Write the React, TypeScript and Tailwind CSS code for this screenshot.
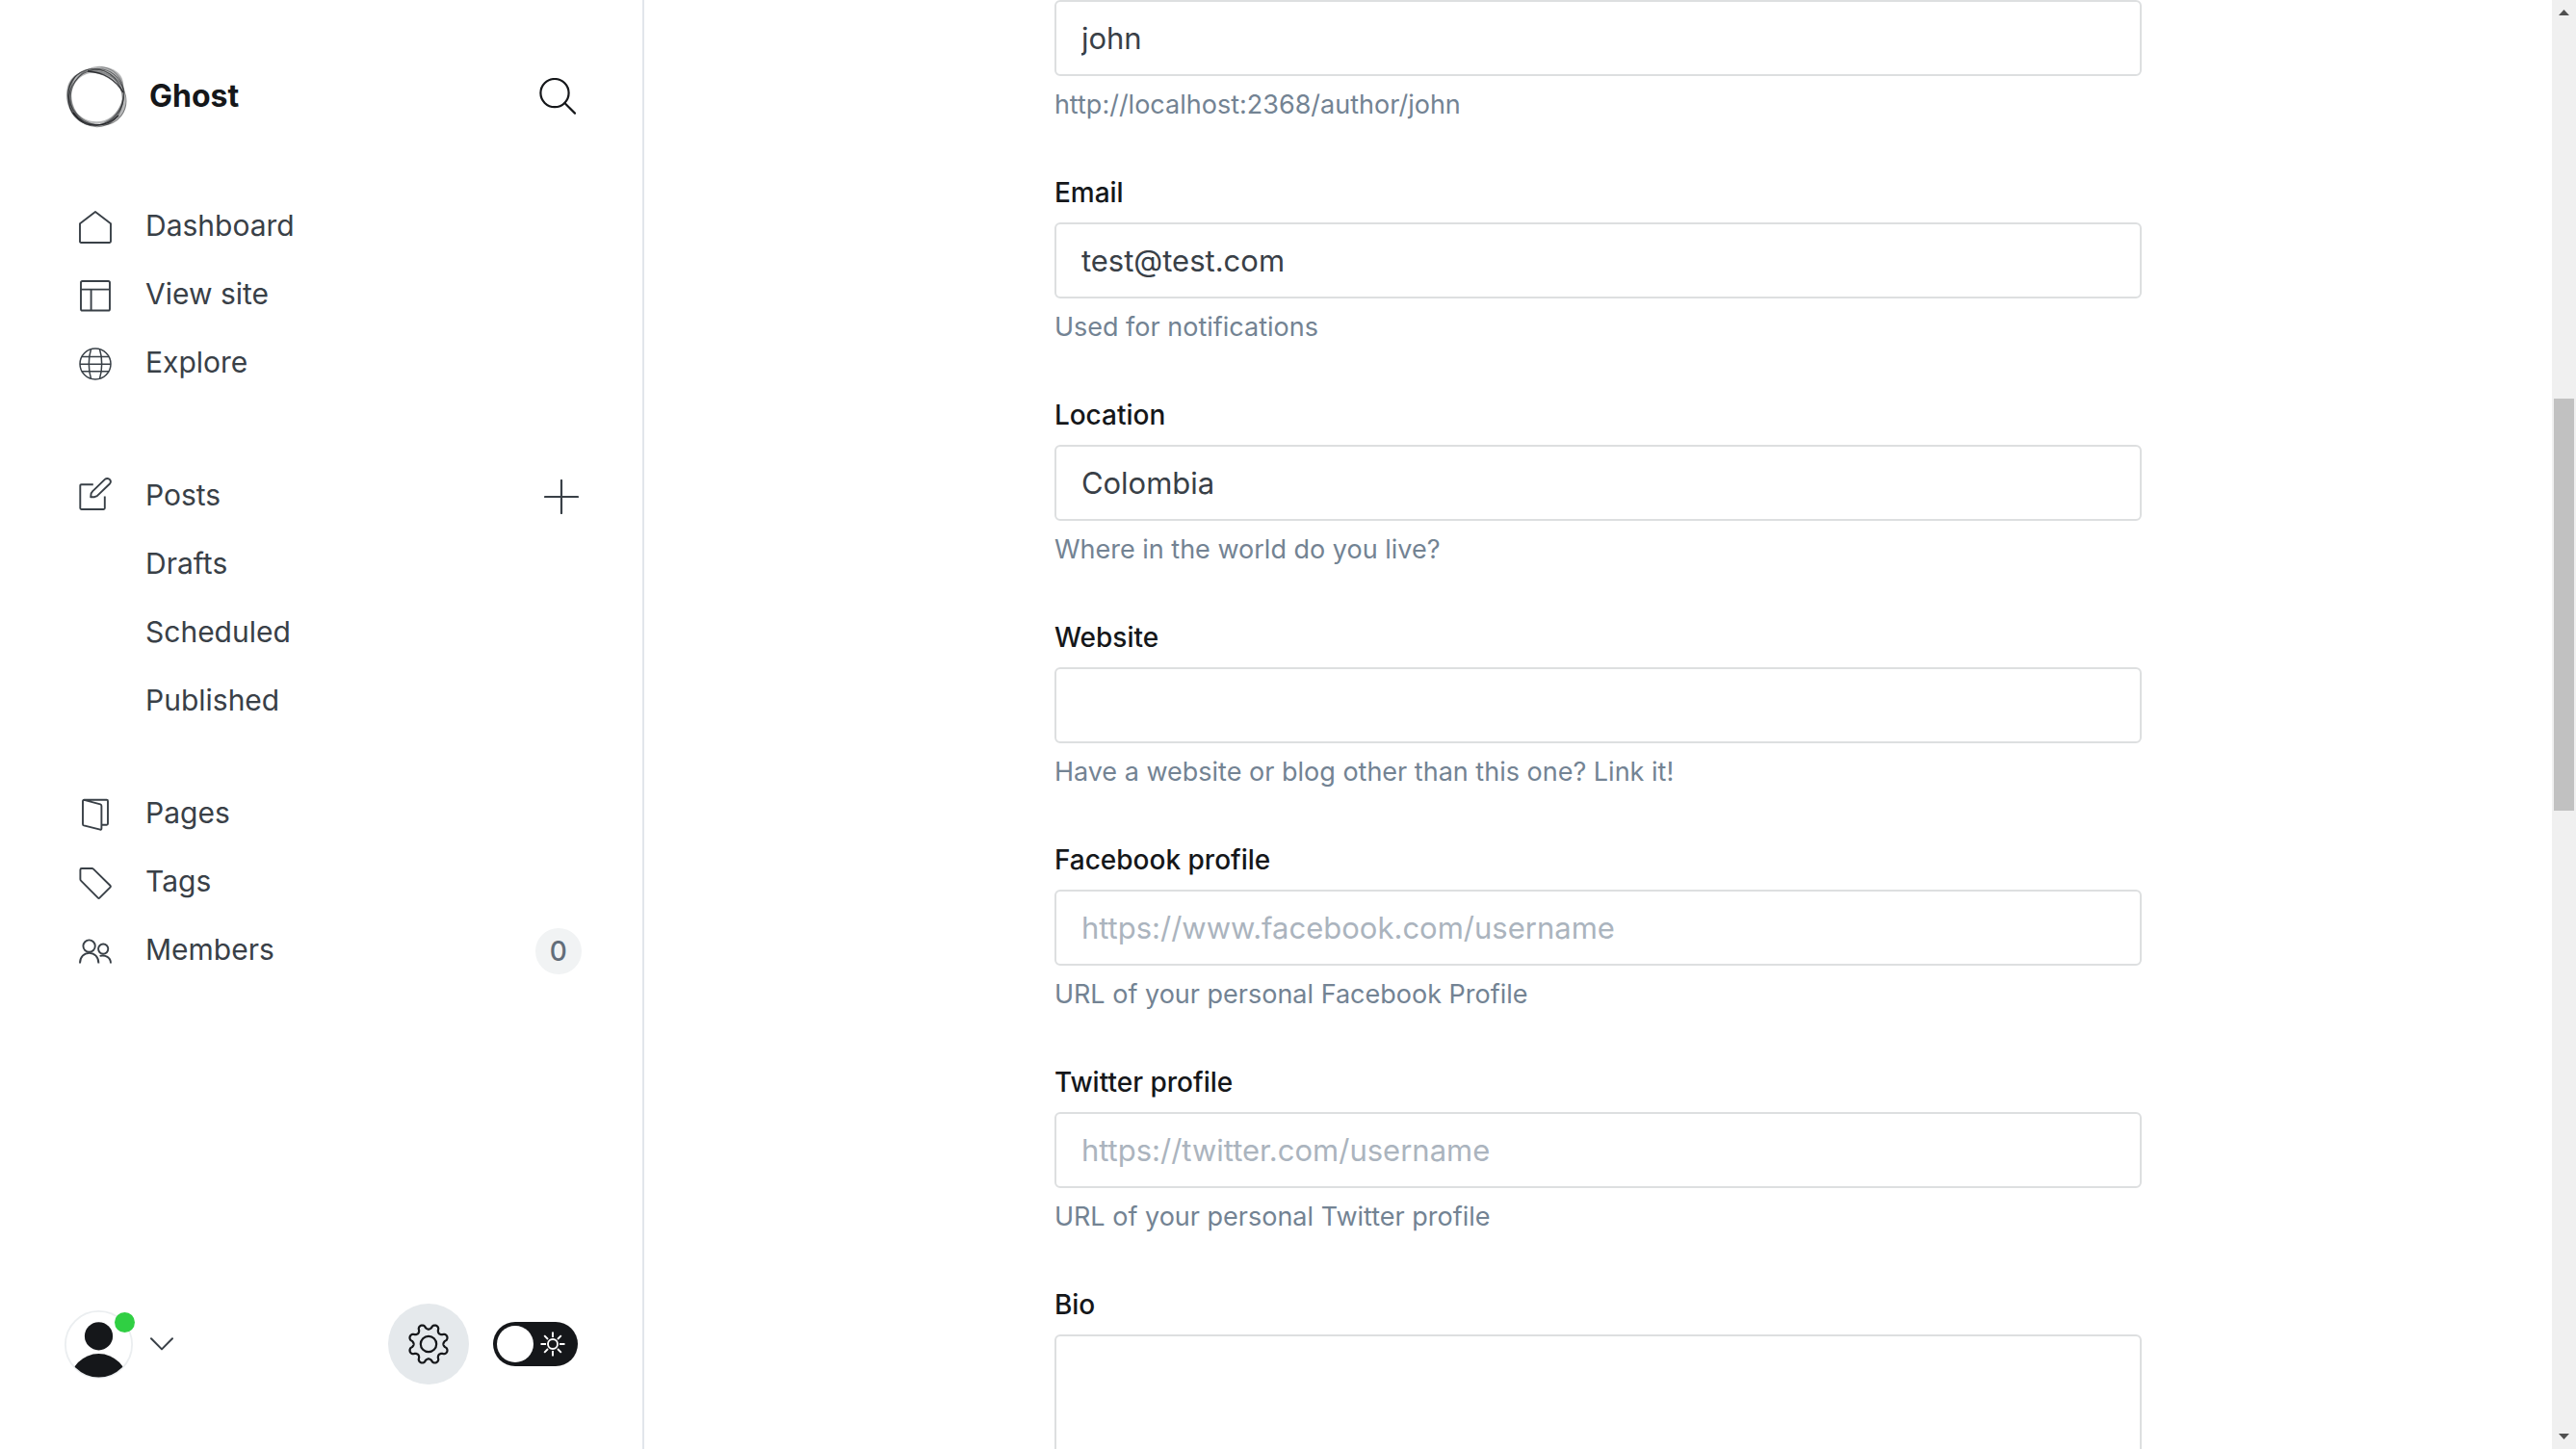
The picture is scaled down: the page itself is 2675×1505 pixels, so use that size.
import React, { ReactNode, useId } from "react";

function Glyph({ children, viewBox = "0 0 34 34" }: { children: ReactNode; viewBox?: string }) {
  return (
    <svg
      viewBox={viewBox}
      className="mt-0.5 size-[34px] shrink-0 overflow-visible"
      fill="none"
      stroke="currentColor"
      strokeWidth="1.9"
      strokeLinejoin="round"
      aria-hidden="true"
    >
      {children}
    </svg>
  );
}

const HomeIcon = () => (
  <Glyph>
    <path d="M17 1 L33 13.2 V31.8 Q33 33 31.8 33 H2.2 Q1 33 1 31.8 V13.2 Z" />
  </Glyph>
);

const LayoutIcon = () => (
  <Glyph>
    <rect x="2" y="2" width="30" height="30.5" rx="1.6" />
    <path d="M2 10.6 H32 M12.6 10.6 V32.5" />
  </Glyph>
);

const GlobeIcon = () => (
  <Glyph>
    <g strokeWidth="1.5">
      <circle cx="17" cy="17" r="16" />
      <path d="M12.5 1.8 C9.6 10.5 9.6 23.5 12.5 32.2 M21.5 1.8 C24.4 10.5 24.4 23.5 21.5 32.2 M2.8 9.6 H31.2 M1 17.2 H33 M2.8 24.8 H31.2" />
    </g>
  </Glyph>
);

const PostsIcon = () => (
  <Glyph viewBox="0 3 34 34">
    <path d="M14.8 7.2 H2.5 Q1.3 7.2 1.3 8.4 V31.8 Q1.3 33 2.5 33 H25.6 Q26.8 33 26.8 31.8 V19.5" />
    <path d="M12.2 20.3 L12.6 16.6 L14 14.4 L26.9 1.9 C28.6 .4 30.9 .8 31.9 2 C33 3.2 33.2 5.2 31.7 6.8 L18.8 19.1 L16.2 20.2 Z" />
  </Glyph>
);

const PagesIcon = () => (
  <Glyph>
    <path d="M5.4 1.8 L22.2 6.4 Q23.4 6.8 23.4 8 V31.6 Q23.4 33 22.1 32.7 L5 28.3 Q4 28 4 27 V3 Q4 1.8 5.4 1.8 H28.8 Q30 1.8 30 3 V26.6 Q30 27.8 28.8 27.8 H23.4" />
  </Glyph>
);

const TagIcon = () => (
  <Glyph>
    <path d="M2.8 2 H13.4 Q14.3 2 15 2.7 L32.4 19.7 Q33.4 20.6 32.4 21.6 L21.6 32.4 Q20.6 33.4 19.6 32.4 L2.2 14.9 Q1.4 14.2 1.4 13.2 V3.4 Q1.4 2 2.8 2 Z" />
  </Glyph>
);

const MembersIcon = () => (
  <Glyph>
    <circle cx="10.6" cy="11.6" r="6.2" />
    <circle cx="25.2" cy="14.6" r="5.1" />
    <path d="M1 29.6 C1 22.8 5.4 18.9 10.7 18.9 S20.4 22.8 20.4 29.6 M21.6 21.9 C27.6 20.4 33 23.4 33 29.6" />
  </Glyph>
);

// Eight-toothed outline around (22, 22): the radius swings between valley and tooth.
const gearOutline =
  Array.from({ length: 240 }, (_, i) => {
    const a = (i / 240) * Math.PI * 2;
    const c = Math.cos(8 * a);
    const r = 18.1 - 2.7 * Math.sign(c) * Math.pow(Math.abs(c), 0.6);
    return `${i ? "L" : "M"}${(22 + r * Math.cos(a)).toFixed(2)} ${(22 + r * Math.sin(a)).toFixed(2)}`;
  }).join(" ") + " Z";

const GearIcon = () => (
  <svg viewBox="0 0 44 44" className="size-11" fill="none" stroke="currentColor" strokeWidth="2.2" strokeLinejoin="round" aria-hidden="true">
    <path d={gearOutline} />
    <circle cx="22" cy="22" r="8.2" />
  </svg>
);

const SunIcon = () => (
  <svg viewBox="0 0 26 26" className="size-[26px]" fill="none" stroke="currentColor" strokeWidth="1.9" aria-hidden="true">
    <circle cx="13" cy="13" r="5" />
    <path d="M13 .5 V6 M13 20 V25.5 M.5 13 H6 M20 13 H25.5 M4.2 4.2 L8 8 M18 18 L21.8 21.8 M4.2 21.8 L8 18 M18 8 L21.8 4.2" />
  </svg>
);

const Logo = () => (
  <svg viewBox="0 0 66 66" className="size-[66px] shrink-0" fill="none" aria-hidden="true">
    <g fill="#15171a" fillOpacity=".3" fillRule="evenodd">
      <path d="M8 14 C16 5 27 6 34 6 C49 9 58 17 61 29 C62 46 52 60 33 62 C16 62 3 50 2 32 C2 24 4 18 8 14 Z M13 17 C6 24 5 38 13 50 C22 61 39 62 49 54 C59 46 62 34 59 25 C54 15 44 9 34 9 C25 8 18 11 13 17 Z" />
      <path d="M24 7 C33 1 46 1 55 8 C61 13 62 19 61 29 C56 17 46 11 37 10 C32 9 28 8 24 7 Z" />
      <path d="M61 27 C65 37 65 47 58 54 C52 60 42 64 34 63 C45 59 53 53 57 44 C60 38 61 33 61 27 Z" />
      <path d="M33 63 C18 63 6 54 3 40 C1 28 4 16 13 10 C6 21 5 35 10 46 C15 56 23 62 33 63 Z" />
    </g>
    <g stroke="#15171a" strokeWidth="1" strokeOpacity=".6">
      <ellipse cx="33" cy="34" rx="30" ry="27.6" transform="rotate(-52 33 34)" />
      <ellipse cx="32" cy="34.5" rx="30.4" ry="28" transform="rotate(68 32 34.5)" strokeOpacity=".5" />
      <ellipse cx="34" cy="33" rx="31" ry="27.4" transform="rotate(-70 34 33)" strokeOpacity=".4" />
      <ellipse cx="34" cy="34" rx="31.4" ry="27.4" transform="rotate(38 34 34)" strokeOpacity=".5" />
      <path d="M9 50 C16 59 24 63 33 63 C43 63 50 59 56 53 M24 7 C38 8 52 14 61 29" strokeWidth="1.6" strokeOpacity=".8" />
    </g>
  </svg>
);

function NavItem({ icon, label, children }: { icon?: ReactNode; label: string; children?: ReactNode }) {
  return (
    <li className="flex h-[71px] items-center">
      <a href="#" className={icon ? "flex flex-1 items-center gap-[35px] pl-[15px]" : "flex-1 pl-[84px]"}>
        {icon}
        <span>{label}</span>
      </a>
      {children}
    </li>
  );
}

function Sidebar() {
  return (
    <aside className="flex w-1/4 shrink-0 flex-col border-r-2 border-[#e2e6eb] pt-[67px] pr-[63px] pb-[67px] pl-[67px]">
      <header className="flex items-center">
        <Logo />
        <span className="ml-[22px] flex-1 text-[32px] leading-10 font-bold text-[#15171a]">Ghost</span>
        <button type="button" aria-label="Search" className="flex w-[50px] justify-center text-[#15171a]">
          <svg viewBox="0 0 38 38" className="size-[38px]" fill="none" stroke="currentColor" strokeWidth="2.2" strokeLinecap="round" aria-hidden="true">
            <circle cx="16" cy="15.6" r="14.6" />
            <path d="M26.4 26 L37 36.6" />
          </svg>
        </button>
      </header>

      <nav aria-label="Main" className="mt-[66px] text-[30px] text-[#394047]">
        <ul>
          <NavItem icon={<HomeIcon />} label="Dashboard" />
          <NavItem icon={<LayoutIcon />} label="View site" />
          <NavItem icon={<GlobeIcon />} label="Explore" />
        </ul>
        <ul className="mt-[67px]">
          <NavItem icon={<PostsIcon />} label="Posts">
            <button type="button" aria-label="New post" className="flex w-[42px] justify-center">
              <svg viewBox="0 0 36 36" className="mt-0.5 size-9" fill="none" stroke="currentColor" strokeWidth="2.2" strokeLinecap="round" aria-hidden="true">
                <path d="M18 1 V35 M1 18 H35" />
              </svg>
            </button>
          </NavItem>
          <NavItem label="Drafts" />
          <NavItem label="Scheduled" />
          <NavItem label="Published" />
        </ul>
        <ul className="mt-[46px]">
          <NavItem icon={<PagesIcon />} label="Pages" />
          <NavItem icon={<TagIcon />} label="Tags" />
          <NavItem icon={<MembersIcon />} label="Members">
            <span className="mt-0.5 flex size-12 items-center justify-center rounded-full bg-[#f1f3f4] text-[28px] font-medium text-[#626d79]">
              0
            </span>
          </NavItem>
        </ul>
      </nav>

      <footer className="mt-auto flex items-center pr-1">
        <button type="button" aria-label="Account menu" className="flex items-center gap-[18px] text-[#394047]">
          <span className="relative">
            <svg viewBox="0 0 71 71" className="size-[71px]" aria-hidden="true">
              <defs>
                <clipPath id="avatar-clip">
                  <circle cx="35.5" cy="35.5" r="34" />
                </clipPath>
              </defs>
              <circle cx="35.5" cy="35.5" r="34.6" fill="#fff" stroke="#ebeef0" strokeWidth="1.8" />
              <circle cx="35.5" cy="26.8" r="14.6" fill="#15171a" />
              <circle cx="35.5" cy="75.4" r="30.3" fill="#15171a" clipPath="url(#avatar-clip)" />
            </svg>
            <span className="absolute top-0.5 -right-0.5 size-[21px] rounded-full bg-[#30cf43]" />
          </span>
          <svg viewBox="0 0 24 14" className="h-3.5 w-6" fill="none" stroke="currentColor" strokeWidth="2" strokeLinecap="round" strokeLinejoin="round" aria-hidden="true">
            <path d="M1 1.2 L12 12.4 L23 1.2" />
          </svg>
        </button>
        <button type="button" aria-label="Settings" className="ml-auto flex size-[84px] items-center justify-center rounded-full bg-[#e5e9ec] text-[#15171a]">
          <GearIcon />
        </button>
        <button type="button" role="switch" aria-checked="false" aria-label="Night shift" className="ml-[25px] flex h-[46px] w-[88px] items-center rounded-full bg-[#15171a] pl-1 text-white">
          <span className="size-[38px] rounded-full bg-white" />
          <span className="flex flex-1 justify-center pr-1.5">
            <SunIcon />
          </span>
        </button>
      </footer>
    </aside>
  );
}

const controlStyle =
  "block w-full rounded-md border-2 border-[#dddfe0] bg-white px-[26px] text-[31px] text-[#394047] placeholder:text-[#abb4be]";

type FieldProps = { label?: string; name: string; value?: string; placeholder?: string; hint?: string; multiline?: boolean };

function Field({ label, name, value, placeholder, hint, multiline }: FieldProps) {
  const id = useId();
  return (
    <div>
      {label && (
        <label htmlFor={id} className="mb-[13px] block text-[28px] leading-9 font-medium text-[#15171a]">
          {label}
        </label>
      )}
      {multiline ? (
        <textarea id={id} name={name} className={`${controlStyle} h-[250px] resize-none py-4`} />
      ) : (
        <input
          id={id}
          name={name}
          type="text"
          aria-label={label ? undefined : name}
          defaultValue={value}
          placeholder={placeholder}
          className={`${controlStyle} h-[79px]`}
        />
      )}
      {hint && <p className="mt-3 text-[27px] leading-9 text-[#738393]">{hint}</p>}
    </div>
  );
}

const fields: FieldProps[] = [
  { name: "slug", value: "john", hint: "http://localhost:2368/author/john" },
  { label: "Email", name: "email", value: "test@test.com", hint: "Used for notifications" },
  { label: "Location", name: "location", value: "Colombia", hint: "Where in the world do you live?" },
  { label: "Website", name: "website", hint: "Have a website or blog other than this one? Link it!" },
  { label: "Facebook profile", name: "facebook", placeholder: "https://www.facebook.com/username", hint: "URL of your personal Facebook Profile" },
  { label: "Twitter profile", name: "twitter", placeholder: "https://twitter.com/username", hint: "URL of your personal Twitter profile" },
  { label: "Bio", name: "bio", multiline: true },
];

function ScrollBar() {
  return (
    <div className="flex w-[25px] shrink-0 flex-col bg-[#f0f0f0] px-0.5 text-[#505050]" aria-hidden="true">
      <svg viewBox="0 0 21 26" className="h-[26px] w-[21px]" fill="currentColor">
        <path d="M10.5 10 L16 16 H5 Z" />
      </svg>
      <div className="grow-[388]" />
      <div className="grow-[428] bg-[#c1c1c1]" />
      <div className="grow-[637]" />
      <svg viewBox="0 0 21 26" className="h-[26px] w-[21px]" fill="currentColor">
        <path d="M10.5 16 L16 10 H5 Z" />
      </svg>
    </div>
  );
}

export default function App() {
  return (
    <div className="flex h-screen overflow-hidden bg-white font-[Inter,sans-serif]">
      <Sidebar />
      <main className="flex flex-1 justify-center overflow-hidden">
        <form className="flex w-full max-w-[1129px] flex-col gap-[55px]">
          {fields.map((field) => (
            <Field key={field.name} {...field} />
          ))}
        </form>
      </main>
      <ScrollBar />
    </div>
  );
}
